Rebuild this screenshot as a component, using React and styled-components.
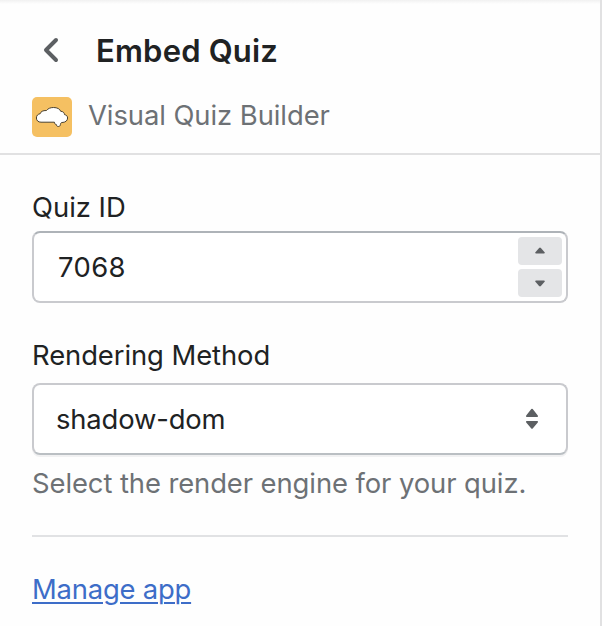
import React from "react";
import styled, { createGlobalStyle } from "styled-components";

const GlobalStyle = createGlobalStyle`
  *, *::before, *::after { box-sizing: border-box; }
  body {
    margin: 0;
    background: #fefefe;
    color: #202223;
    font-family: Inter, "Liberation Sans", sans-serif;
    font-size: 27.4px;
    line-height: 40px;
  }
`;

const Panel = styled.main`
  height: 626px;
  overflow: hidden;
  border-right: 2px solid #e1e1e2;
  background: linear-gradient(#f1f1f1, #fefefe 4px);
`;

const Header = styled.header`
  height: 155px;
  padding: 31px 32px 0;
  border-bottom: 2px solid #e1e1e2;
`;

const TitleRow = styled.div`
  display: flex;
  align-items: center;
  height: 40px;
`;

const BackButton = styled.button`
  display: flex;
  width: 40px;
  height: 40px;
  margin-right: 24px;
  padding: 0;
  border: 0;
  background: none;
`;

const Title = styled.h1`
  margin: 0;
  font-size: 31px;
  font-weight: 600;
  letter-spacing: 0.2px;
  white-space: nowrap;
`;

const AppRow = styled.div`
  display: flex;
  gap: 16px;
  margin-top: 26px;
`;

const AppIcon = styled.svg`
  width: 40px;
  height: 40px;
  border-radius: 5px;
  background: #f5c062;
`;

const Label = styled.span`
  display: block;
  color: ${(p) => p.$color || "inherit"};
  letter-spacing: ${(p) => p.$spacing || 0}px;
  white-space: nowrap;
`;

const AppName = styled(Label)`
  margin-top: -2px;
`;

const Content = styled.section`
  padding: 32px 32px 0;
`;

const Field = styled.div`
  display: flex;
  align-items: center;
  justify-content: space-between;
  height: 72px;
  margin-top: ${(p) => p.$gap}px;
  border: 2px solid #c9cace;
  border-radius: 8px;
  background: #fff;
`;

const NumberField = styled(Field)`
  padding: 0 4px 0 24px;
  border-top-color: #aeb3b8;
`;

const SelectField = styled(Field)`
  padding: 0 24px 0 22px;
  border-bottom-color: #babfc3;
  box-shadow: 0 2px 0 #f1f1f2;
`;

const Stepper = styled.div`
  display: grid;
  gap: 4px;
`;

const StepButton = styled.button`
  display: flex;
  width: 44px;
  height: 28px;
  padding: 0;
  border: 0;
  border-radius: 4px;
  background: #e4e5e7;
`;

const RenderingLabel = styled(Label)`
  margin-top: 32px;
`;

const HelpText = styled(Label)`
  margin-top: 8px;
`;

const Divider = styled.hr`
  height: 2px;
  margin: 32px 0;
  border: 0;
  background: #e1e2e4;
`;

const Link = styled.a`
  color: #3d6dc8;
  letter-spacing: -0.2px;
  text-decoration: underline;
  text-decoration-thickness: 2px;
  text-underline-offset: 3px;
`;

export default function App() {
  return (
    <>
      <GlobalStyle />
      <Panel>
        <Header>
          <TitleRow>
            <BackButton aria-label="Back">
              <svg width="40" height="40" viewBox="0 0 40 40" fill="none" stroke="#5c5f62" strokeWidth="4" strokeLinecap="round" strokeLinejoin="round">
                <path d="M24 9 14 19 24 29" />
              </svg>
            </BackButton>
            <Title>Embed Quiz</Title>
          </TitleRow>
          <AppRow>
            <AppIcon viewBox="0 0 40 40">
              <path
                d="M4.4 21C4.4 18.5 6 17 8.2 16.7C8.700 14.6 10.8 13.4 14.5 13.5C16 11.6 18.3 10.5 21.5 10.5C25.3 10.5 28 12 28.7 14.3C31 14.3 32.4 15.7 32.5 17.6C34.5 18 35.6 19.2 35.6 21C35.6 23.7 33.3 25.5 30 25.5C28.7 25.8 28.5 26.5 28.4 27.6C28.3 28.9 27.5 29.5 26.3 29.5C25 29.5 24.5 28.8 24.4 27.6C23.2 27.5 22.6 26.7 22.4 25.2H9C6.2 25.2 4.4 23.5 4.4 21Z"
                fill="#fff"
                stroke="#49402f"
                strokeWidth="1"
                strokeLinejoin="round"
              />
            </AppIcon>
            <AppName $color="#6d7175" $spacing={-0.06}>Visual Quiz Builder</AppName>
          </AppRow>
        </Header>
        <Content>
          <Label>Quiz ID</Label>
          <NumberField $gap={4}>
            <Label $spacing={0.4}>7068</Label>
            <Stepper>
              <StepButton aria-label="Increase">
                <svg width="44" height="28" fill="#5c5f62">
                  <path d="M18 16.5h8q1.4-.3.6-1.3l-3.7-4.3q-.9-.9-1.8 0l-3.7 4.3q-.8 1 .6 1.3Z" />
                </svg>
              </StepButton>
              <StepButton aria-label="Decrease">
                <svg width="44" height="28" fill="#5c5f62">
                  <path d="M18 11.5h8q1.4.3.6 1.3l-3.7 4.3q-.9.9-1.8 0l-3.7-4.3q-.8-1 .6-1.3Z" />
                </svg>
              </StepButton>
            </Stepper>
          </NumberField>
          <RenderingLabel $spacing={-0.07}>Rendering Method</RenderingLabel>
          <SelectField $gap={8}>
            <Label $spacing={-0.15}>shadow-dom</Label>
            <svg width="20" height="24" fill="#5c5f62">
              <path d="M4.7 10h10.6q1.2-.4.5-1.5L10.7 2.1q-.7-.7-1.4 0L4.2 8.5q-.7 1.1.5 1.5ZM4.7 14h10.6q1.2.4.5 1.5l-5.1 5.9q-.7.7-1.4 0l-5.1-5.9q-.7-1.1.5-1.5Z" />
            </svg>
          </SelectField>
          <HelpText $color="#6d7175" $spacing={-0.08}>Select the render engine for your quiz.</HelpText>
          <Divider />
          <Link href="#">Manage app</Link>
        </Content>
      </Panel>
    </>
  );
}
